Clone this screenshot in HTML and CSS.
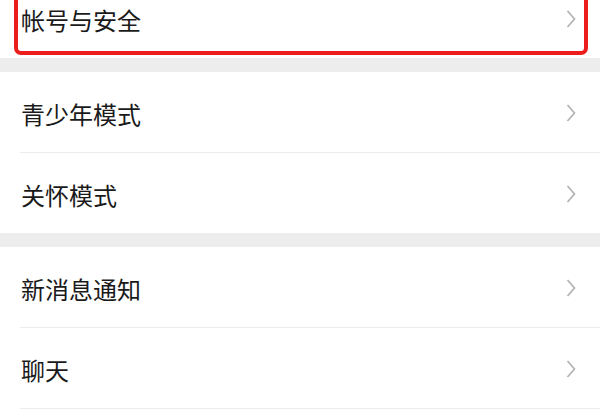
FILE: index.html
```html
<!DOCTYPE html>
<html lang="zh-CN">
<head>
<meta charset="utf-8">
<link rel="stylesheet" href="styles.css">
</head>
<body>
<div class="page">
  <div class="group first">
    <div class="row highlighted">
      <span class="label">帐号与安全</span>
      <svg class="chev" viewBox="0 0 10 20" width="10" height="20"><polyline points="1.5,2 8.5,10 1.5,18" fill="none" stroke="#b2b2b2" stroke-width="1.7"/></svg>
      <div class="redbox"></div>
    </div>
  </div>
  <div class="band"></div>
  <div class="group">
    <div class="row">
      <span class="label">青少年模式</span>
      <svg class="chev" viewBox="0 0 10 20" width="10" height="20"><polyline points="1.5,2 8.5,10 1.5,18" fill="none" stroke="#b2b2b2" stroke-width="1.7"/></svg>
    </div>
    <div class="divider"></div>
    <div class="row">
      <span class="label">关怀模式</span>
      <svg class="chev" viewBox="0 0 10 20" width="10" height="20"><polyline points="1.5,2 8.5,10 1.5,18" fill="none" stroke="#b2b2b2" stroke-width="1.7"/></svg>
    </div>
  </div>
  <div class="band"></div>
  <div class="group">
    <div class="row">
      <span class="label">新消息通知</span>
      <svg class="chev" viewBox="0 0 10 20" width="10" height="20"><polyline points="1.5,2 8.5,10 1.5,18" fill="none" stroke="#b2b2b2" stroke-width="1.7"/></svg>
    </div>
    <div class="divider"></div>
    <div class="row">
      <span class="label">聊天</span>
      <svg class="chev" viewBox="0 0 10 20" width="10" height="20"><polyline points="1.5,2 8.5,10 1.5,18" fill="none" stroke="#b2b2b2" stroke-width="1.7"/></svg>
    </div>
    <div class="divider"></div>
    <div class="row"></div>
  </div>
</div>
</body>
</html>
```

FILE: styles.css
```css
html, body {
  margin: 0;
  padding: 0;
  background: #ffffff;
  overflow: hidden;
}
.page {
  width: 600px;
  font-family: "Noto Sans CJK SC", "Noto Sans", sans-serif;
  color: #1a1a1a;
}
.group {
  background: #ffffff;
  display: flex;
  flex-direction: column;
}
.group.first {
  margin-top: -22px;
}
.row {
  position: relative;
  height: 80px;
  display: flex;
  align-items: center;
  justify-content: space-between;
  padding: 0 24px 0 21px;
}
.label {
  font-size: 24px;
  line-height: 24px;
  margin-top: 4px;
}
.chev {
  display: block;
  margin-top: 2px;
}
.divider {
  height: 1px;
  background: #ececec;
  margin-left: 20px;
}
.band {
  height: 14px;
  background: #ededed;
}
.redbox {
  position: absolute;
  left: 14px;
  right: 12px;
  top: 0;
  bottom: 3px;
  border: 4px solid #ee1d1d;
  border-radius: 7px;
}
```
